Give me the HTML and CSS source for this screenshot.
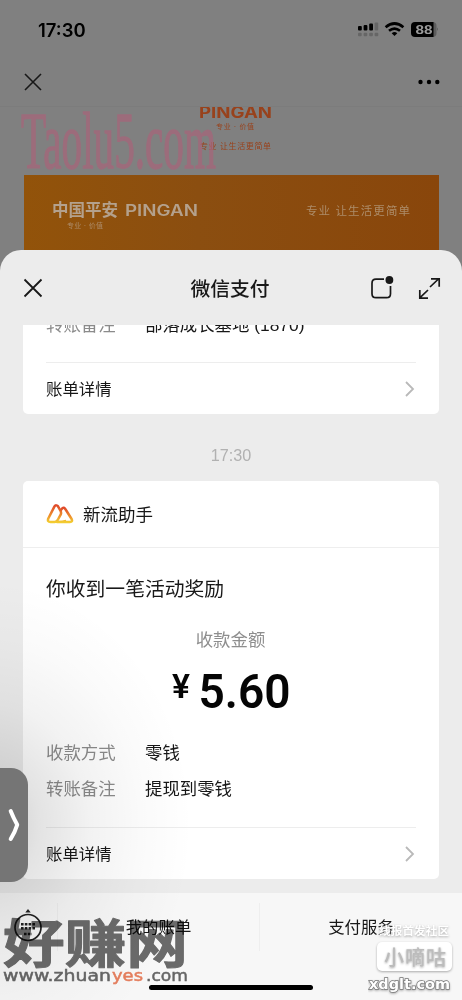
FILE: index.html
```
<!DOCTYPE html>
<html lang="zh-CN">
<head>
<meta charset="utf-8">
<title>微信支付</title>
<link rel="stylesheet" href="styles.css">
</head>
<body>
<main class="phone">
  <section class="backdrop">
    <header class="status">
      <span class="clock">17:30</span>
      <svg class="signals" width="84" height="20" viewBox="0 0 84 20">
        <g fill="#000"><rect x="3" y="7" width="3.8" height="4.6" rx="1"/><rect x="8.6" y="6" width="3.8" height="5.6" rx="1"/><rect x="14.2" y="4.5" width="3.8" height="7.1" rx="1"/></g>
        <g fill="#666"><rect x="19.6" y="3.5" width="3.6" height="8.1" rx="1"/><rect x="3" y="13.8" width="3.7" height="3.4" rx="1"/><rect x="8.6" y="13.8" width="3.7" height="3.4" rx="1"/><rect x="14.2" y="13.8" width="3.7" height="3.4" rx="1"/><rect x="19.6" y="13.8" width="3.7" height="3.4" rx="1"/></g>
        <g fill="none" stroke="#000" stroke-width="2.7"><path d="M30.6 8.2Q39.5 .8 48.4 8.2"/><path d="M34 11.8Q39.5 7.4 45 11.8"/></g>
        <path d="M36.7 14.2Q39.5 11.8 42.3 14.2L39.5 17Z"/>
        <path d="M82 8.5Q84 10 82 12Z" fill="#606060"/>
        <rect x="72" y="3" width="9.5" height="15" rx="4" fill="#5c5c5c"/>
        <path d="M60 3H78.5V18H60Q56 18 56 14V7Q56 3 60 3Z"/>
        <text class="battery" x="60.5" y="15.3" textLength="17" lengthAdjust="spacingAndGlyphs">88</text>
      </svg>
    </header>
    <nav class="page-nav">
      <svg width="20" height="20" viewBox="0 0 20 20"><path d="M2 2L18 18M18 2L2 18" stroke="#181818" stroke-width="1.6"/></svg>
      <svg width="22" height="6" viewBox="0 0 22 6"><circle cx="2.5" cy="3" r="2.2"/><circle cx="11" cy="3" r="2.2"/><circle cx="19.3" cy="3" r="2.2"/></svg>
    </nav>
    <div class="article">
      <svg class="brand" width="76" height="44" viewBox="0 0 76 44">
        <g fill="#98421c"><text class="logo-text" x="1" y="10.5" font-size="15.5" textLength="73" lengthAdjust="spacingAndGlyphs">PINGAN</text>
        <text x="18" y="22.4" font-size="7" textLength="38">专业 · 价值</text>
        <text x="2" y="42.4" font-size="8" textLength="71">专业 让生活更简单</text></g>
      </svg>
      <svg class="banner" width="415" height="76" viewBox="0 0 415 76">
        <defs><linearGradient id="amber"><stop offset="0" stop-color="#92530a"/><stop offset=".42" stop-color="#8b4e10"/><stop offset="1" stop-color="#89460b"/></linearGradient></defs>
        <rect width="415" height="76" fill="url(#amber)"/>
        <text class="banner-logo" x="28" y="41" textLength="66" lengthAdjust="spacingAndGlyphs">中国平安</text>
        <text class="banner-logo latin" x="101" y="41" textLength="73" lengthAdjust="spacingAndGlyphs">PINGAN</text>
        <text class="banner-sub" x="43" y="52.5" font-size="7" textLength="36">专业 · 价值</text>
        <text class="banner-sub" x="282" y="40" font-size="11.5" textLength="104">专业 让生活更简单</text>
      </svg>
    </div>
    <svg class="site-mark" width="200" height="72" viewBox="0 0 200 72"><text x="1" y="62" textLength="195" lengthAdjust="spacingAndGlyphs">Taolu5.com</text></svg>
  </section>

  <section class="sheet">
    <header class="sheet-head">
      <svg width="20" height="20" viewBox="0 0 20 20"><path d="M1.5 1.5L18.5 18.5M18.5 1.5L1.5 18.5" stroke="#181818" stroke-width="1.8"/></svg>
      <h1>微信支付</h1>
      <svg class="tools" width="72" height="26" viewBox="0 0 72 26">
        <path d="M15 4.2H7Q3 4.2 3 8.2V18.7Q3 22.7 7 22.7H17.5Q21.5 22.7 21.5 18.7V11" fill="none" stroke="#181818" stroke-width="1.7"/><circle cx="20.4" cy="5" r="3.9" fill="#181818"/>
        <path d="M61 12L70 3.5M62 3.8H70.2V11.8M59 15L50.8 22.8M50.8 15V23.2H59" fill="none" stroke="#181818" stroke-width="1.7"/>
      </svg>
    </header>
    <div class="messages">
      <article class="card previous">
        <div class="field cut"><span class="label">转账备注</span><span class="value">部落成长基地 (1870)</span></div>
        <div class="details"><span>账单详情</span><svg width="10" height="16" viewBox="0 0 10 16"><path d="M1 1L8 8L1 15"/></svg></div>
      </article>
      <time>17:30</time>
      <article class="card payment">
        <div class="sender">
          <svg width="28" height="22" viewBox="0 0 28 22"><defs><linearGradient id="peak" x2="0" y2="1"><stop stop-color="#df492b"/><stop offset=".6" stop-color="#ed8d2c"/><stop offset="1" stop-color="#f3cc30"/></linearGradient></defs><g fill="none" stroke="url(#peak)" stroke-width="2.5" stroke-linejoin="round"><path d="M10.4 2.2Q9.3 2 8.5 3.4L2.3 15.5Q1 19 4.5 19H8.6Q10.7 19 12 16.5L14.8 11.4Q15.5 9.5 14.4 7.6L12 3.3Q11.2 2.2 10.4 2.2Z"/><path d="M14.4 7.6L16.4 5.2Q18 3.8 19.3 6L25.6 16Q27 19 24 19H11Q17 18.9 20.2 18"/></g></svg>
          <span>新流助手</span>
        </div>
        <div class="summary">
          <h2>你收到一笔活动奖励</h2>
          <p class="caption">收款金额</p>
          <svg class="amount" width="122" height="50" viewBox="0 0 122 50"><text x="1" y="31.3" font-size="33" textLength="18" lengthAdjust="spacingAndGlyphs">¥</text><text x="27.5" y="41" font-size="48.5" textLength="92" lengthAdjust="spacingAndGlyphs">5.60</text></svg>
          <div class="field"><span class="label">收款方式</span><span class="value">零钱</span></div>
          <div class="field"><span class="label">转账备注</span><span class="value">提现到零钱</span></div>
        </div>
        <div class="details"><span>账单详情</span><svg width="10" height="16" viewBox="0 0 10 16"><path d="M1 1L8 8L1 15"/></svg></div>
      </article>
    </div>
    <footer class="menu">
      <div class="keyboard"><svg width="30" height="34" viewBox="0 0 30 34"><circle cx="15" cy="18.5" r="13" fill="none" stroke="#222" stroke-width="1.7"/><path d="M12.3 3.4L15 0L17.7 3.4Z" fill="#222"/><path d="M8 15.3H22M8 19.3H22M11 25H19" stroke="#222" stroke-width="2.4" stroke-dasharray="2.6 1.2"/></svg></div>
      <span class="menu-item">我的账单</span>
      <span class="menu-item">支付服务</span>
    </footer>
  </section>

  <div class="edge-shade"></div>
  <div class="drawer"><svg width="14" height="34" viewBox="0 0 14 34"><path d="M4.7 3Q7 9 11.2 16.8Q9 24 4.7 31" fill="none" stroke="#fff" stroke-width="4" stroke-linecap="round" stroke-linejoin="round"/></svg></div>
  <div class="home-indicator"></div>
  <svg class="earn-mark" width="196" height="74" viewBox="0 0 196 74">
    <text class="earn-name" x="3" y="47" textLength="185" lengthAdjust="spacingAndGlyphs">好赚网</text>
    <g class="earn-url"><text x="3" y="64.5" textLength="108" lengthAdjust="spacingAndGlyphs">www.zhuan</text><text class="yes" x="112" y="64.5" textLength="31" lengthAdjust="spacingAndGlyphs">yes</text><text x="146" y="64.5" textLength="42" lengthAdjust="spacingAndGlyphs">.com</text></g>
  </svg>
  <aside class="community">
    <svg width="94" height="80" viewBox="0 0 94 80">
      <text class="community-top" x="11" y="19" textLength="70">线报首发社区</text>
      <rect class="badge" x="9" y="26" width="75" height="29" rx="5"/>
      <text class="community-name" x="16" y="49" textLength="62">小嘀咕</text>
      <text class="community-url" x="1" y="73" textLength="81" lengthAdjust="spacingAndGlyphs">xdglt.com</text>
    </svg>
  </aside>
</main>
</body>
</html>
```
FILE: styles.css
```
* { box-sizing: border-box; }
body, h1, h2, p { margin: 0; }
body { font-family: "Liberation Sans", "Noto Sans CJK SC", sans-serif; color: #181818; }
svg { display: block; flex-shrink: 0; }
.phone { position: relative; width: 462px; height: 1000px; overflow: hidden; background: #808080; }
.backdrop { position: relative; height: 250px; }
.status { height: 58px; padding: 19px 23px 0 38px; display: flex; justify-content: space-between; }
.clock { font: 600 18.5px/22px Inter, sans-serif; color: #000; }
.battery { font: 700 13px "Liberation Sans", sans-serif; fill: #999; }
.page-nav { height: 49px; padding: 0 22px 0 23px; display: flex; align-items: center; justify-content: space-between; border-bottom: 1px solid #7c7c7c; }
.article { padding-left: 24px; }
.brand { margin-left: 174px; overflow: hidden; }
.logo-text { font-family: Inter, sans-serif; font-weight: 700; }
.banner { margin-top: 24px; }
.banner-logo { font: 700 16.5px "Noto Sans CJK SC", sans-serif; fill: #b4a18d; }
.latin { font-family: Inter, sans-serif; font-weight: 600; font-size: 15.5px; }
.banner-sub { fill: #ad8c69; }
.site-mark { position: absolute; left: 20px; top: 106px; }
.site-mark text { font: 81px "Liberation Serif", serif; fill: #a9647a; stroke: #a9647a; stroke-width: 1.3px; opacity: .7; }
.sheet { position: absolute; top: 250px; left: 0; width: 462px; height: 750px; border-radius: 21px 21px 0 0; overflow: hidden; background: #ececec; }
.sheet-head { height: 75px; padding: 1px 21px 0 23px; display: grid; grid-template-columns: 70px 1fr 74px; align-items: center; }
.sheet-head .tools { margin-left: 2px; }
.sheet-head h1 { text-align: center; font: 500 19.8px/28px "Noto Sans CJK SC", sans-serif; }
.messages { height: 568px; padding: 0 23px; overflow: hidden; }
.card { background: #fff; border-radius: 5px; }
.previous { height: 89px; padding: 0 23px; border-radius: 0 0 5px 5px; overflow: hidden; }
.field { display: flex; gap: 29px; font-size: 17.4px; line-height: 36px; }
.label { color: #8b8b8b; width: 70px; flex-shrink: 0; }
.value { color: #171717; white-space: nowrap; }
.cut { height: 37px; line-height: 0; }
.details { height: 52px; display: flex; justify-content: space-between; align-items: center; border-top: 1px solid #ededed; font-size: 16.4px; }
.details span { padding-bottom: 2px; }
.details svg { margin-right: 1px; }
.details path { fill: none; stroke: #b9b9b9; stroke-width: 1.8; }
.messages time { display: block; height: 67px; padding-top: 31px; text-align: center; font: 16.2px/20px "Liberation Sans", sans-serif; color: #b1b1b1; }
.payment { height: 398px; }
.sender { height: 67px; padding-left: 23px; display: flex; align-items: center; gap: 9px; border-bottom: 1px solid #eee; font-size: 17.5px; }
.sender span { padding-bottom: 2px; }
.summary { padding: 26px 23px 0; height: 279px; }
.summary h2 { font-weight: 400; font-size: 19.8px; line-height: 30px; }
.caption { margin: 22px 1px 0 0; color: #8e8e8e; font-size: 17.4px; line-height: 28px; text-align: center; }
.amount { margin: 13px 0 0 125px; }
.amount text { font-family: Roboto, sans-serif; font-weight: 600; fill: #050505; }
.amount + .field { margin-top: 18px; }
.payment .details { margin: 0 23px; }
.menu { height: 107px; display: grid; grid-template-columns: 57px 202px 203px; background: #f7f7f7; }
.keyboard { padding: 16px 0 0 13px; }
.menu-item { margin-top: 10px; height: 48px; border-left: 1px solid #eee; line-height: 48px; font-size: 16.4px; text-align: center; }
.edge-shade { position: absolute; left: 0; top: 565px; width: 225px; height: 435px; background: radial-gradient(ellipse 205px 245px at -12px 260px, rgba(0,0,0,.21), rgba(0,0,0,.11) 25%, rgba(0,0,0,.05) 50%, rgba(0,0,0,.018) 75%, transparent); }
.drawer { position: absolute; left: 0; top: 768px; width: 28px; height: 114px; padding: 40px 0 0 6px; border-radius: 0 17px 17px 0; background: #757575; }
.home-indicator { position: absolute; left: 149px; top: 985px; width: 164px; height: 5px; border-radius: 3px; background: #000; }
.earn-mark { position: absolute; left: 0; top: 916px; mix-blend-mode: multiply; }
.earn-name { font: 700 52px "Noto Sans CJK SC", sans-serif; fill: #6d6d6d; stroke: #6d6d6d; stroke-width: 1px; stroke-linejoin: round; }
.earn-url { font: 400 16.5px "DejaVu Sans", sans-serif; fill: #696969; stroke: #696969; stroke-width: .5px; }
.earn-url .yes { fill: #ed8260; stroke: #ed8260; }
.community { position: absolute; left: 368px; top: 916px; }
.community text, .badge { filter: drop-shadow(0 1px 1px #aaa); }
.community-top { font: 700 11.5px "Noto Sans CJK SC", sans-serif; fill: #fff; }
.badge { fill: #fff; }
.community-name { font: 500 20px "Noto Sans CJK SC", sans-serif; fill: #bcbcbc; }
.community-url { font: 700 14px "DejaVu Sans", sans-serif; fill: #fff; stroke: #777; stroke-width: 1.4px; paint-order: stroke; }
```
